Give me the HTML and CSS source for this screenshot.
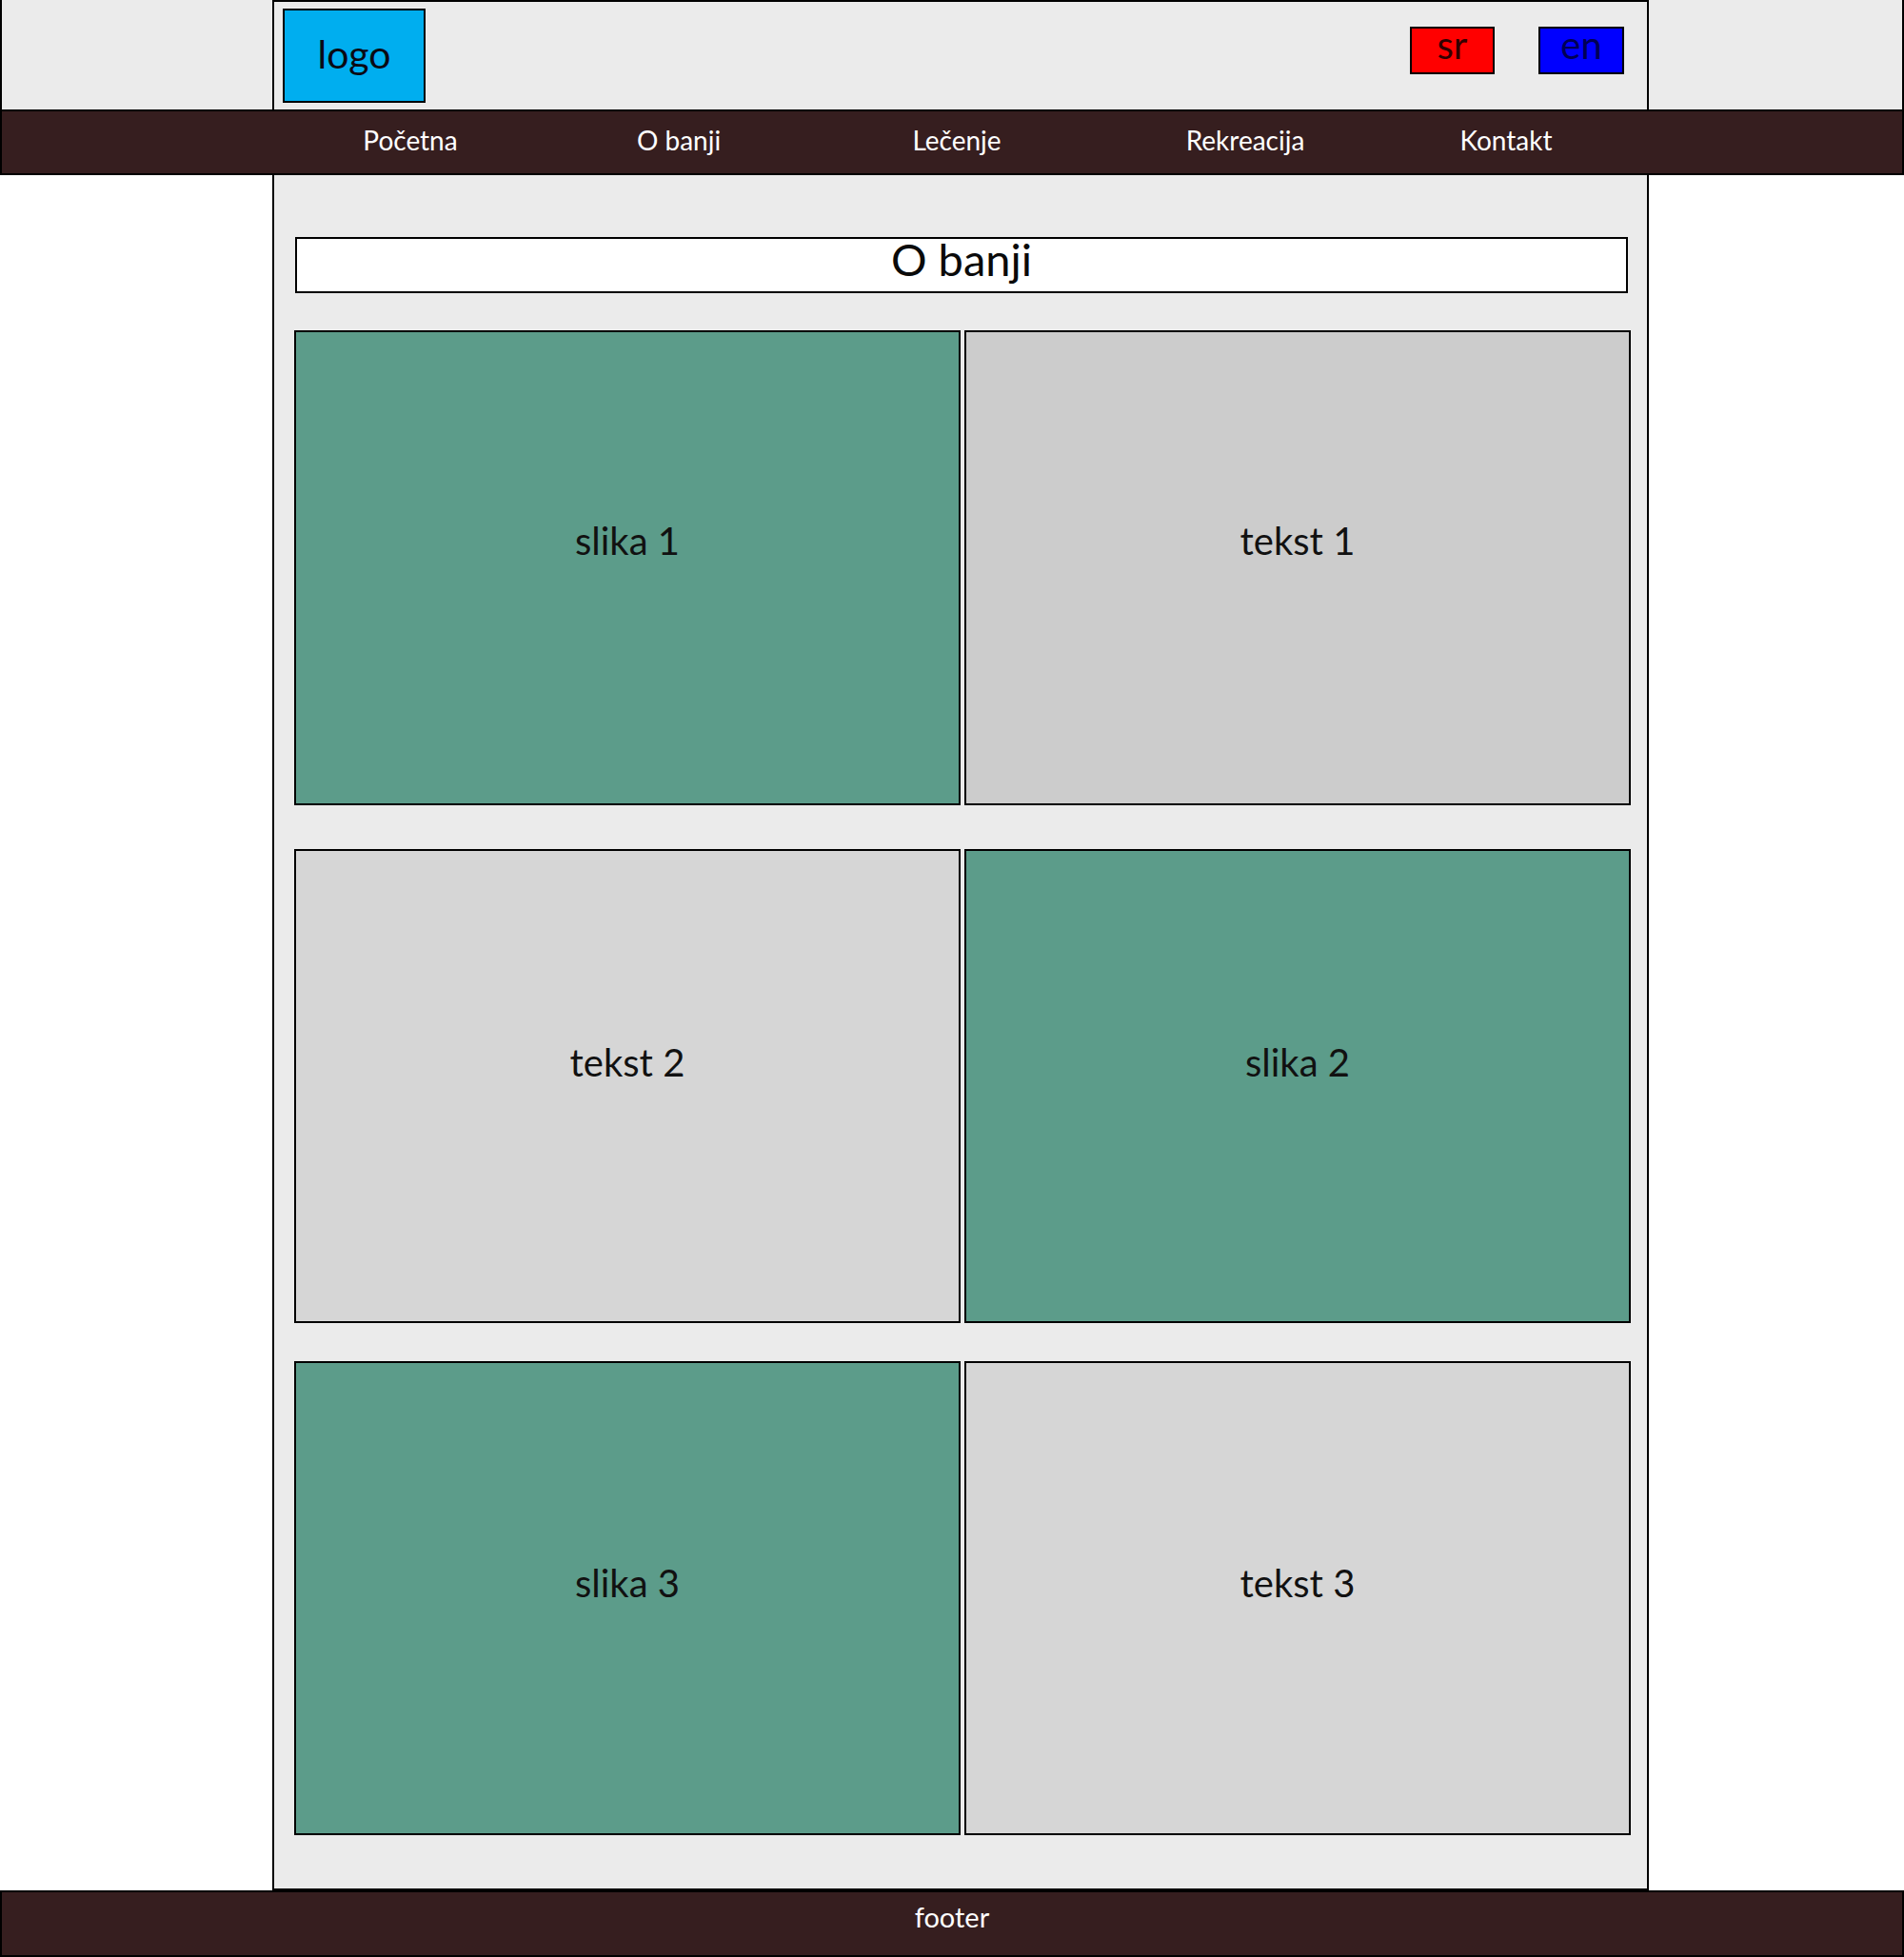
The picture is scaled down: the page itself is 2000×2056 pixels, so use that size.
FILE: index.html
```html
<!DOCTYPE html>
<html lang="sr">
<head>
<meta charset="utf-8">
<title>O banji</title>
<link rel="stylesheet" href="styles.css">
</head>
<body>
<header class="top">
  <div class="top-inner">
    <div class="logo">logo</div>
    <div class="langs">
      <div class="lang lang-sr">sr</div>
      <div class="lang lang-en">en</div>
    </div>
  </div>
</header>
<nav class="nav">
  <div class="nav-inner">
    <a class="nav-item">Početna</a>
    <a class="nav-item">O banji</a>
    <a class="nav-item">Lečenje</a>
    <a class="nav-item">Rekreacija</a>
    <a class="nav-item">Kontakt</a>
  </div>
</nav>
<main class="page">
  <h1 class="title">O banji</h1>
  <div class="grid">
    <div class="card img r1">slika 1</div>
    <div class="card text dark r1">tekst 1</div>
    <div class="card text r2">tekst 2</div>
    <div class="card img r2">slika 2</div>
    <div class="card img r3">slika 3</div>
    <div class="card text r3">tekst 3</div>
  </div>
</main>
<footer class="foot">footer</footer>
</body>
</html>
```
FILE: styles.css
```css
* { box-sizing: border-box; }
html, body { margin: 0; padding: 0; background: #ffffff; }
body {
  width: 2000px;
  font-family: Lato, "Liberation Sans", sans-serif;
  color: #111111;
}

.top {
  height: 115px;
  background: #ebebeb;
  border-left: 2px solid #000;
  border-right: 2px solid #000;
}
.top-inner {
  margin-left: 284px;
  width: 1446px;
  height: 115px;
  border: 2px solid #000;
  border-bottom: 0;
  display: flex;
  align-items: flex-start;
}
.logo {
  margin-top: 7px;
  margin-left: 9px;
  width: 150px;
  height: 99px;
  background: #00aeef;
  border: 2px solid #000;
  display: flex;
  align-items: center;
  justify-content: center;
  font-size: 41px;
  padding-bottom: 4px;
  color: #0a0a14;
}
.langs {
  margin-left: auto;
  margin-top: 26px;
  margin-right: 24px;
  display: flex;
  gap: 46px;
}
.lang {
  width: 90px;
  height: 50px;
  border: 2px solid #000;
  font-size: 40px;
  line-height: 34px;
  text-align: center;
}
.lang-sr { background: #ff0000; color: #330000; width: 89px; }
.lang-en { background: #0000ff; color: #000055; }

.nav {
  height: 69px;
  background: #361e1f;
  border: 2px solid #000;
}
.nav-inner {
  margin-left: 284px;
  height: 65px;
  display: grid;
  grid-template-columns: 290px 274px 310px 296px 252px;
}
.nav-item {
  color: #ffffff;
  font-size: 28px;
  display: flex;
  align-items: center;
  justify-content: center;
  padding-bottom: 6px;
}

.page {
  margin-left: 286px;
  width: 1446px;
  height: 1802px;
  background: #ebebeb;
  border: 2px solid #000;
  border-top: 0;
  padding: 65px 17px 0 21px;
}
.title {
  margin: 0 3px 39px 1px;
  height: 59px;
  background: #ffffff;
  border: 2px solid #000;
  font-size: 47px;
  font-weight: 400;
  display: flex;
  align-items: center;
  justify-content: center;
  padding-bottom: 13px;
  color: #0a0a0a;
}
.grid {
  display: grid;
  grid-template-columns: 700px 700px;
  grid-template-rows: 499px 544px 538px;
  column-gap: 4px;
}
.grid .r2 { margin-top: 46px; }
.grid .r3 { margin-top: 40px; }
.card {
  border: 2px solid #000;
  display: flex;
  align-items: center;
  justify-content: center;
  font-size: 40px;
  color: #111111;
}
.card.r1 { padding-bottom: 57px; }
.card.r2 { padding-bottom: 50px; }
.card.r3 { padding-bottom: 32px; }
.card.img { background: #5c9c8a; }
.card.text { background: #d6d6d6; }
.card.text.dark { background: #cccccc; }

.foot {
  height: 70px;
  background: #361e1f;
  border: 2px solid #000;
  color: #ffffff;
  font-size: 29px;
  display: flex;
  align-items: center;
  justify-content: center;
  padding-bottom: 16px;
}
```
